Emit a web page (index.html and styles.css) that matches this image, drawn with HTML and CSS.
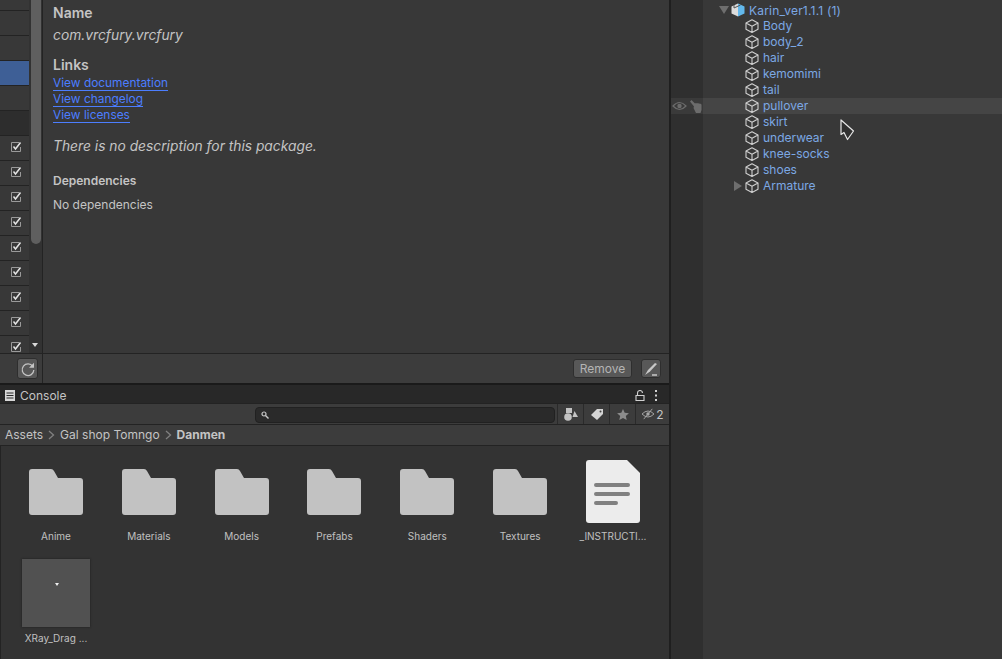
FILE: index.html
```html
<!DOCTYPE html>
<html lang="en">
<head>
  <meta charset="UTF-8" />
  <title>Unity Editor</title>
  <link rel="stylesheet" href="styles.css">
</head>
<body>
  <svg class="defs" width="0" height="0">
    <symbol id="cube" viewBox="0 0 14 14">
      <path d="M7 .8 13 4v6.200L7 13.400 1 10.200V4zM1 4l6 3.200L13 4M7 7.200v6.200" fill="none" stroke="currentColor" stroke-width="1.100" stroke-linejoin="round"/>
    </symbol>
    <symbol id="folder" viewBox="0 0 54 46">
      <path d="M3 0h19q2 0 3 2l4 7h22q3 0 3 3v31q0 3-3 3H3q-3 0-3-3V3q0-3 3-3z" fill="currentColor"/>
    </symbol>
    <symbol id="check" viewBox="0 0 12 12">
      <path d="M9 1.500H1.500v9h9V6" fill="none" stroke="#9a9a9a" stroke-width="1"/>
      <path d="M3.500 5.500 5.500 8 10.500 1.500" fill="none" stroke="#e4e4e4" stroke-width="1.500"/>
    </symbol>
  </svg>

  <div class="editor">
    <div class="left-col">
      <section class="package-manager">
        <div class="pm-main">
          <div class="pm-list">
            <div class="pm-row"></div>
            <div class="pm-row"></div>
            <div class="pm-row"></div>
            <div class="pm-row selected"></div>
            <div class="pm-row"></div>
            <div class="pm-row group"></div>
            <div class="pm-row"><svg class="check"><use href="#check"/></svg></div>
            <div class="pm-row"><svg class="check"><use href="#check"/></svg></div>
            <div class="pm-row"><svg class="check"><use href="#check"/></svg></div>
            <div class="pm-row"><svg class="check"><use href="#check"/></svg></div>
            <div class="pm-row"><svg class="check"><use href="#check"/></svg></div>
            <div class="pm-row"><svg class="check"><use href="#check"/></svg></div>
            <div class="pm-row"><svg class="check"><use href="#check"/></svg></div>
            <div class="pm-row"><svg class="check"><use href="#check"/></svg></div>
            <div class="pm-row"><svg class="check"><use href="#check"/></svg></div>
          </div>
          <div class="pm-scroll">
            <div class="thumb"></div>
            <div class="arrow-down"></div>
          </div>
          <div class="pm-detail">
            <h3>Name</h3>
            <p class="pkg-name">com.vrcfury.vrcfury</p>
            <h3 class="links-title">Links</h3>
            <a class="link">View documentation</a>
            <a class="link">View changelog</a>
            <a class="link">View licenses</a>
            <p class="no-desc">There is no description for this package.</p>
            <h4>Dependencies</h4>
            <p class="no-deps">No dependencies</p>
          </div>
        </div>
        <div class="pm-footer">
          <div class="pm-footer-left">
            <button class="icon-btn refresh">
              <svg width="16" height="16" viewBox="0 0 16 16"><path d="M12.800 5.500A5.800 5.800 0 1 0 13.800 9" fill="none" stroke="#c4c4c4" stroke-width="1.300"/><path d="M14 1.800v5h-5z" fill="#c4c4c4"/></svg>
            </button>
          </div>
          <div class="pm-footer-right">
            <button class="text-btn">Remove</button>
            <button class="icon-btn pen">
              <svg width="16" height="16" viewBox="0 0 16 16"><path d="M2 14 5 9 12 2l2 1-7 7.500z" fill="#c8c8c8"/><path d="M9 14h5" stroke="#c8c8c8" stroke-width="1.500"/></svg>
            </button>
          </div>
        </div>
      </section>

      <section class="console">
        <div class="tab-bar">
          <div class="tab">
            <svg width="10" height="11" viewBox="0 0 10 11"><path d="M0 0h10v11H0z" fill="#d8d8d8"/><path d="M1.500 3h7M1.500 5.500h7M1.500 8h7" stroke="#2a2a2a"/></svg>
            <span>Console</span>
          </div>
          <div class="tab-tools">
            <svg width="10" height="11" viewBox="0 0 10 11"><path d="M1 5.500h8v5H1zM2.500 5V3a2.500 2.500 0 0 1 5 0" fill="none" stroke="#d0d0d0" stroke-width="1.100"/></svg>
            <svg width="4" height="11" viewBox="0 0 4 11"><path d="M1 0h2v2H1zM1 4.500h2v2H1zM1 9h2v2H1z" fill="#d0d0d0"/></svg>
          </div>
        </div>
        <div class="search-bar">
          <div class="search-box">
            <svg width="8" height="8" viewBox="0 0 8 8"><circle cx="3" cy="3" r="2" fill="none" stroke="#c8c8c8" stroke-width="1.200"/><path d="m4.500 4.500 3 3" stroke="#c8c8c8" stroke-width="1.400"/></svg>
          </div>
          <div class="filter">
            <svg width="14" height="13" viewBox="0 0 14 13"><path d="M2 0h6v5H2z" fill="#c4c4c4"/><circle cx="4" cy="9" r="3.800" fill="#c4c4c4"/><path d="m10.500 3 3.500 6H8.500z" fill="#c4c4c4"/></svg>
          </div>
          <div class="filter">
            <svg width="12" height="11" viewBox="0 0 12 11"><path d="M6 0h6v5l-6 6-6-5z" fill="#d4d4d4"/><circle cx="9.500" cy="2.500" r="1" fill="#444"/></svg>
          </div>
          <div class="filter">
            <svg width="12" height="11" viewBox="0 0 14 13"><path d="m7 0 2 4.500 5 .5-3.700 3.200 1.100 4.800L7 10.500 2.600 13l1.100-4.800L0 5l5-.5z" fill="#8c8c8c"/></svg>
          </div>
          <div class="filter hidden-count">
            <svg width="14" height="12" viewBox="0 0 16 14"><path d="M1 7q7-7 14 0-7 7-14 0z" fill="none" stroke="#a8a8a8" stroke-width="1.100"/><circle cx="8" cy="7" r="2" fill="#a8a8a8"/><path d="M3 13 13 1" stroke="#a8a8a8" stroke-width="1.100"/></svg>
            <span>2</span>
          </div>
        </div>
        <div class="breadcrumb">
          <span>Assets</span>
          <svg class="crumb-sep" width="7" height="10" viewBox="0 0 7 10"><path d="m1 1 4.500 4L1 9" fill="none" stroke="#808080" stroke-width="1.300"/></svg>
          <span>Gal shop Tomngo</span>
          <svg class="crumb-sep" width="7" height="10" viewBox="0 0 7 10"><path d="m1 1 4.500 4L1 9" fill="none" stroke="#808080" stroke-width="1.300"/></svg>
          <strong>Danmen</strong>
        </div>
        <div class="assets">
          <div class="asset"><svg class="folder"><use href="#folder"/></svg><span>Anime</span></div>
          <div class="asset"><svg class="folder"><use href="#folder"/></svg><span>Materials</span></div>
          <div class="asset"><svg class="folder"><use href="#folder"/></svg><span>Models</span></div>
          <div class="asset"><svg class="folder"><use href="#folder"/></svg><span>Prefabs</span></div>
          <div class="asset"><svg class="folder"><use href="#folder"/></svg><span>Shaders</span></div>
          <div class="asset"><svg class="folder"><use href="#folder"/></svg><span>Textures</span></div>
          <div class="asset doc-asset">
            <svg class="doc" viewBox="0 0 54 63"><path d="M3 0h38l13 13v47q0 3-3 3H3q-3 0-3-3V3q0-3 3-3z" fill="#ececec"/><path d="M10 25h32M10 34h32M10 43h20" stroke="#808080" stroke-width="4" stroke-linecap="round"/></svg>
            <span>_INSTRUCTI...</span>
          </div>
          <div class="asset thumb-asset">
            <div class="material"><i></i></div>
            <span>XRay_Drag ...</span>
          </div>
        </div>
      </section>
    </div>

    <aside class="hierarchy">
      <div class="scene-col">
        <div class="scene-marks">
          <svg width="15" height="10" viewBox="0 0 15 10"><path d="M1 5q6.500-7 13 0-6.500 7-13 0z" fill="none" stroke="#6c6c6c" stroke-width="1.200"/><circle cx="7.500" cy="5" r="2.200" fill="#6c6c6c"/></svg>
          <svg width="12" height="13" viewBox="0 0 12 13"><path d="M0 1.500 1.500 0 5 3.500 6 3l1 .5 1-.5 1 .7 1-.3 1.500 1V10L10.500 13H6L3.500 8 4 6.500z" fill="#6c6c6c"/></svg>
        </div>
      </div>
      <div class="tree">
        <div class="tree-row root">
          <i class="caret open"></i>
          <svg class="prefab" width="14" height="14" viewBox="0 0 14 14"><path d="M7 .5 13.500 3.500v7L7 13.500z" fill="#62b8ec"/><path d="M7 .5.500 3.500v7L7 13.500z" fill="#dcdcdc"/><path d="M3 2v3l6.500-3" stroke="#555" fill="none"/></svg>
          <span>Karin_ver1.1.1 (1)</span>
        </div>
        <div class="tree-row"><svg class="cube"><use href="#cube"/></svg><span>Body</span></div>
        <div class="tree-row"><svg class="cube"><use href="#cube"/></svg><span>body_2</span></div>
        <div class="tree-row"><svg class="cube"><use href="#cube"/></svg><span>hair</span></div>
        <div class="tree-row"><svg class="cube"><use href="#cube"/></svg><span>kemomimi</span></div>
        <div class="tree-row"><svg class="cube"><use href="#cube"/></svg><span>tail</span></div>
        <div class="tree-row hover"><svg class="cube"><use href="#cube"/></svg><span>pullover</span></div>
        <div class="tree-row"><svg class="cube"><use href="#cube"/></svg><span>skirt</span></div>
        <div class="tree-row"><svg class="cube"><use href="#cube"/></svg><span>underwear</span></div>
        <div class="tree-row"><svg class="cube"><use href="#cube"/></svg><span>knee-socks</span></div>
        <div class="tree-row"><svg class="cube"><use href="#cube"/></svg><span>shoes</span></div>
        <div class="tree-row"><i class="caret closed"></i><svg class="cube"><use href="#cube"/></svg><span>Armature</span></div>
      </div>
      <svg class="cursor" width="15" height="23" viewBox="0 0 15 23"><path d="M1 1v14.500l3-2 3.500 7 6-8.500z" fill="#303030" stroke="#e8e8e8" stroke-width="1.200" stroke-linejoin="round"/></svg>
    </aside>
  </div>
</body>
</html>
```

FILE: styles.css
```css
* {
  box-sizing: border-box;
}
html, body {
  margin: 0;
  height: 100%;
}
body {
  font-family: Inter, "Noto Sans", sans-serif;
  font-size: 12px;
  color: #c4c4c4;
  background: #232323;
  overflow: hidden;
}
.defs {
  position: absolute;
}
.editor {
  display: flex;
  width: 1002px;
  height: 659px;
}
.left-col {
  width: 669px;
  display: flex;
  flex-direction: column;
}

/* package manager */
.package-manager {
  height: 385px;
  display: flex;
  flex-direction: column;
  border-bottom: 2px solid #1a1a1a;
}
.pm-main {
  height: 353px;
  display: flex;
  background: #383838;
}
.pm-list {
  width: 29px;
  background: #383838;
  overflow: hidden;
}
.pm-row {
  height: 25px;
  border-bottom: 1px solid #232323;
  display: flex;
  align-items: center;
  justify-content: flex-end;
  padding: 0 7px 3px 0;
  flex-shrink: 0;
}
.pm-row:first-child {
  height: 11px;
}
.pm-row.selected {
  background: #3e5f96;
}
.pm-row.group {
  background: #2d2d2d;
}
.pm-scroll {
  width: 14px;
  background: #323232;
  border-right: 1px solid #232323;
  position: relative;
}
.thumb {
  width: 10px;
  height: 244px;
  background: #5f5f5f;
  border-radius: 0 0 5px 5px;
  margin-left: 2px;
}
.arrow-down {
  position: absolute;
  left: 3px;
  top: 343px;
  border: 3.500px solid transparent;
  border-top: 4px solid #d8d8d8;
  border-bottom: 0;
}
.check {
  width: 12px;
  height: 12px;
}
.pm-detail {
  flex: 1;
  padding: 4px 10px;
  display: flex;
  flex-direction: column;
  align-items: flex-start;
}
.pm-detail h3 {
  margin: 0;
  font-size: 14px;
  line-height: 17px;
  font-weight: 600;
  color: #c4c4c4;
}
.pkg-name {
  margin: 6px 0 0;
  font-size: 13.800px;
  line-height: 17px;
  font-style: italic;
}
.pm-detail .links-title {
  margin: 12px 0 2px;
}
.link {
  color: #4c7eff;
  border-bottom: 1px solid #4c7eff;
  font-size: 11.900px;
  line-height: 15px;
  height: 16px;
}
.no-desc {
  margin: 15px 0 0;
  font-size: 13.800px;
  line-height: 17px;
  font-style: italic;
}
.pm-detail h4 {
  margin: 18px 0 0;
  font-size: 12px;
  line-height: 15px;
  font-weight: 600;
}
.no-deps {
  margin: 9px 0 0;
  line-height: 15px;
}
.pm-footer {
  flex: 1;
  display: flex;
  background: #3c3c3c;
  border-top: 1px solid #232323;
}
.pm-footer-left {
  width: 43px;
  display: flex;
  justify-content: flex-end;
  align-items: center;
  padding-right: 4px;
  border-right: 1px solid #232323;
}
.pm-footer-right {
  flex: 1;
  display: flex;
  justify-content: flex-end;
  align-items: center;
  gap: 9px;
  padding-right: 8px;
}
.icon-btn {
  width: 21px;
  height: 21px;
  padding: 0;
  border: 1px solid #2e2e2e;
  border-radius: 3px;
  background: #585858;
  display: flex;
  align-items: center;
  justify-content: center;
}
.icon-btn.pen {
  width: 20px;
  height: 19px;
}
.text-btn {
  height: 19px;
  width: 59px;
  padding: 0;
  border: 1px solid #2e2e2e;
  border-radius: 3px;
  background: #585858;
  color: #b4b4b4;
  font: 12px Inter, sans-serif;
}

/* console */
.console {
  flex: 1;
  display: flex;
  flex-direction: column;
  min-height: 0;
}
.tab-bar {
  height: 19px;
  background: #282828;
  display: flex;
  justify-content: space-between;
  align-items: center;
  border-bottom: 1px solid #232323;
  padding: 2px 11px 0 5px;
}
.tab {
  display: flex;
  align-items: center;
  gap: 5px;
}
.tab-tools {
  display: flex;
  align-items: center;
  gap: 9px;
}
.search-bar {
  height: 21px;
  background: #3c3c3c;
  border-bottom: 1px solid #232323;
  display: flex;
  justify-content: flex-end;
  align-items: stretch;
}
.search-box {
  width: 300px;
  height: 16px;
  margin: 3px 2px 0 0;
  background: #2a2a2a;
  border: 1px solid #212121;
  border-radius: 4px;
  display: flex;
  align-items: center;
  padding-left: 5px;
}
.filter {
  width: 26px;
  border-left: 1px solid #2a2a2a;
  display: flex;
  align-items: center;
  justify-content: center;
}
.hidden-count {
  width: 34px;
  gap: 1px;
}
.breadcrumb {
  height: 21px;
  background: #3c3c3c;
  border-bottom: 1px solid #232323;
  display: flex;
  align-items: center;
  gap: 5px;
  padding: 0 0 1px 5px;
}
.breadcrumb strong {
  font-weight: 700;
}
.assets {
  flex: 1;
  background: #333333;
  border-left: 1px solid #232323;
  display: flex;
  flex-wrap: wrap;
  align-content: flex-start;
  padding: 14px 0 0 19px;
  column-gap: 20.830px;
}
.asset {
  width: 72px;
  height: 98px;
  display: flex;
  flex-direction: column;
  align-items: center;
  font-size: 10px;
  line-height: 13px;
  color: #c0c0c0;
}
.asset span {
  margin-top: 15px;
}
.folder {
  width: 54px;
  height: 46px;
  margin-top: 9px;
  flex-shrink: 0;
  color: #c2c2c2;
}
.doc {
  width: 54px;
  height: 63px;
  flex-shrink: 0;
}
.doc-asset span {
  margin-top: 7px;
}
.thumb-asset {
  height: auto;
}
.material {
  width: 68px;
  height: 68px;
  background: #515151;
  box-shadow: 0 0 2px #1c1c1c;
  display: flex;
  justify-content: center;
  margin-top: 1px;
}
.material i {
  width: 4px;
  height: 3px;
  margin: 24px 0 0 2px;
  background: #f0f0f0;
  clip-path: polygon(0 0, 100% 0, 50% 100%);
}
.thumb-asset span {
  margin-top: 5px;
}

/* hierarchy */
.hierarchy {
  flex: 1;
  display: flex;
  position: relative;
  border-left: 2px solid #1f1f1f;
  background: #383838;
}
.scene-col {
  width: 32px;
  background: #2f2f2f;
  padding-top: 98px;
}
.scene-marks {
  height: 16px;
  display: flex;
  align-items: center;
  gap: 3px;
  padding-left: 1px;
  background: #3a3a3a;
}
.tree {
  flex: 1;
  padding-top: 2px;
}
.tree-row {
  height: 16px;
  display: flex;
  align-items: center;
  padding: 0 0 1px 42px;
  color: #7ca8e4;
  position: relative;
}
.tree-row.hover {
  background: #454545;
}
.tree-row.root {
  padding: 0 0 0 28px;
  gap: 4px;
  letter-spacing: .2px;
}
.cube {
  width: 14px;
  height: 14px;
  margin-right: 4px;
  color: #d0d0d0;
}
.caret {
  position: absolute;
}
.caret.open {
  left: 16px;
  top: 4px;
  border: 5px solid transparent;
  border-top: 8px solid #6e6e6e;
  border-bottom: 0;
}
.caret.closed {
  left: 31px;
  top: 3px;
  border: 5px solid transparent;
  border-left: 8px solid #6e6e6e;
  border-right: 0;
}
.cursor {
  position: absolute;
  left: 169px;
  top: 119px;
}
```
